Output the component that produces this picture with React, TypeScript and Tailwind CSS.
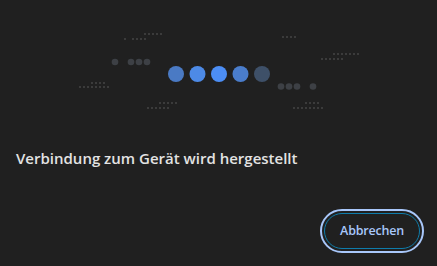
const tinyRows: { y: number; xs: number[] }[] = [
  { y: 33, xs: [144, 148, 152, 156, 160] },
  { y: 38, xs: [124, 132, 136, 140, 144] },
  { y: 36, xs: [282, 286, 290, 294] },
  { y: 53, xs: [333, 337, 341, 345, 349, 353, 357] },
  { y: 58, xs: [321, 325, 329, 333, 337, 341] },
  { y: 82, xs: [91, 95, 99, 103] },
  { y: 86, xs: [79, 83, 87, 91, 95, 99, 103, 107] },
  { y: 102, xs: [159, 163, 167, 171, 175] },
  { y: 107, xs: [147, 151, 155, 159, 163, 167] },
  { y: 102, xs: [305, 309, 313, 317] },
  { y: 107, xs: [293, 297, 301, 305, 309, 313, 317, 321] },
]

const smallDots = [
  { x: 115, y: 62 },
  { x: 131, y: 62 },
  { x: 139, y: 62 },
  { x: 147, y: 62 },
  { x: 281, y: 86.5 },
  { x: 289, y: 86.5 },
  { x: 297, y: 86.5 },
  { x: 313, y: 86.5 },
]

const bigDots = [
  { x: 176, fill: '#4a7ac4' },
  { x: 197.5, fill: '#4d8ae6' },
  { x: 219, fill: '#4c8ef5' },
  { x: 240.5, fill: '#4a7dcc' },
  { x: 262, fill: '#3e5068' },
]

function Illustration() {
  return (
    <svg className="block w-full h-[128px]" viewBox="0 0 437 128" fill="none">
      {tinyRows.map((row, i) =>
        row.xs.map((x) => (
          <rect key={`${i}-${x}`} x={x} y={row.y} width="2" height="2" fill="#3b3b3b" />
        ))
      )}
      {smallDots.map((d) => (
        <circle key={`${d.x}-${d.y}`} cx={d.x} cy={d.y} r="3.3" fill="#3d4045" />
      ))}
      {bigDots.map((d) => (
        <circle key={d.x} cx={d.x} cy="74" r="8" fill={d.fill} />
      ))}
    </svg>
  )
}

export default function App() {
  return (
    <div className="h-screen w-full bg-[#202020] flex flex-col font-['Open_Sans',sans-serif]">
      <Illustration />

      <h1 className="mt-5 px-4 text-[15px] leading-5 font-semibold text-[#e3e3e3]">
        Verbindung zum Gerät wird hergestellt
      </h1>

      <div className="flex-1" />

      <div className="flex justify-end pr-[17px] pb-[17px]">
        <button className="h-9 px-[15px] rounded-full border border-[#0e7cab] bg-transparent text-[12.5px] tracking-[-0.2px] font-semibold text-[#a8c7fa] outline-2 outline-offset-2 outline-[#a8c7fa]">
          Abbrechen
        </button>
      </div>
    </div>
  )
}
